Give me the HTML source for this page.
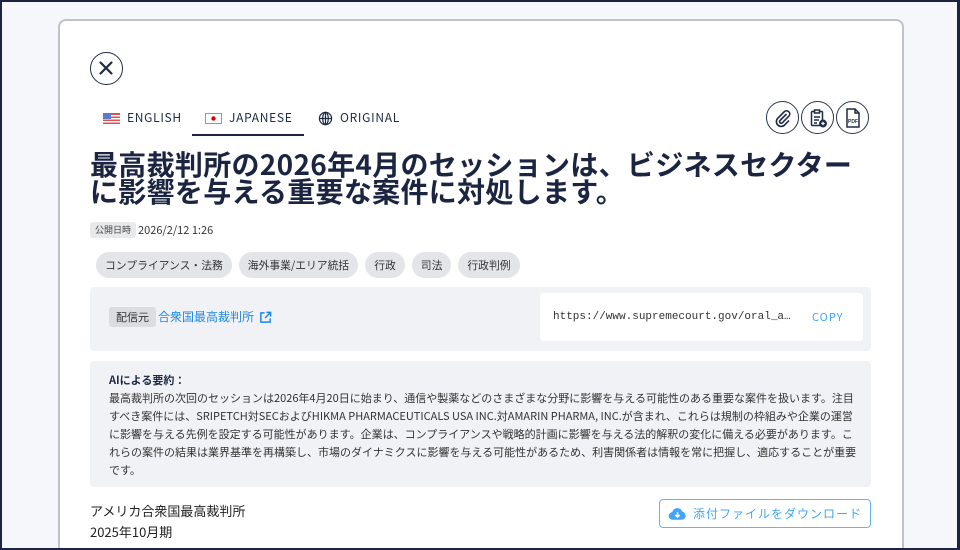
<!DOCTYPE html>
<html><head><meta charset="utf-8"><style>
*{margin:0;padding:0;box-sizing:border-box}
html,body{width:960px;height:550px;overflow:hidden}
body{background:#1b2440;font-family:"Noto Sans CJK JP","Liberation Sans",sans-serif;color:#1f2a44;position:relative}
.bg{position:absolute;left:2px;top:2px;width:955px;height:546px;background:#f5f7fb;overflow:hidden}
.card{position:absolute;left:56px;top:17px;width:846px;height:560px;background:#fff;border:2px solid #bfc3c9;border-radius:8px;overflow:hidden}
.abs{position:absolute}
.close{left:30px;top:31px;width:33px;height:33px;border:1.5px solid #1f2a44;border-radius:50%}
.tab{top:88px;font-size:12px;line-height:18px;letter-spacing:0.7px;color:#1f2a44;display:flex;align-items:center;gap:7px;white-space:nowrap}
.icb{top:80px;width:33px;height:33px;border:1.5px solid #2b3552;border-radius:50%;display:flex;align-items:center;justify-content:center}
h1{position:absolute;left:30px;top:130px;font-size:28px;line-height:27px;letter-spacing:0.3px;font-weight:bold;color:#1b2440;white-space:nowrap}
.tag{background:#e4e5e8;border-radius:13px;height:26px;line-height:26px;font-size:10.8px;padding:0 9px;color:#333;white-space:nowrap}
.src{left:30px;top:266px;width:781px;height:64px;background:#f1f2f5;border-radius:4px}
.sum{left:30px;top:340px;width:781px;height:126px;background:#f1f2f5;border-radius:4px;font-size:11px;line-height:18px;color:#333;padding:10px 0 0 19px;white-space:nowrap}
</style></head><body><div class="bg">
<div class="card">
 <div class="abs close"><svg width="30" height="30" viewBox="0 0 30 30"><path d="M9.5 9.5L20.5 20.5M20.5 9.5L9.5 20.5" stroke="#1f2a44" stroke-width="2.2" stroke-linecap="round"/></svg></div>
 <div class="abs tab" style="left:43px"><svg width="17" height="11"><rect width="17" height="11" fill="#e05050"/><rect y="2" width="17" height="1.5" fill="#fff"/><rect y="5" width="17" height="1.5" fill="#fff"/><rect y="8" width="17" height="1.5" fill="#fff"/><rect width="8" height="6" fill="#5a7bc8"/></svg>ENGLISH</div>
 <div class="abs tab" style="left:145px"><svg width="17" height="11"><rect x=".5" y=".5" width="16" height="10" fill="#fff" stroke="#999"/><circle cx="8.5" cy="5.5" r="2.2" fill="#d00"/></svg>JAPANESE</div>
 <div class="abs" style="left:132px;top:113px;width:112px;height:2px;background:#1b2440"></div>
 <div class="abs tab" style="left:258px"><svg width="15" height="15" viewBox="0 0 16 16" fill="none" stroke="#1f2a44" stroke-width="1.3"><circle cx="8" cy="8" r="6.5"/><ellipse cx="8" cy="8" rx="3" ry="6.5"/><path d="M1.5 8h13M8 1.5v13"/></svg>ORIGINAL</div>
 <div class="abs icb" style="left:706px"><svg width="20" height="20" viewBox="0 0 20 20" fill="none" stroke="#1f2a44" stroke-width="1.6"><path d="M13.5 6L7 12.5a1.6 1.6 0 0 0 2.3 2.3L16 8a3.2 3.2 0 0 0-4.5-4.5L4.8 10.2a4.8 4.8 0 0 0 6.8 6.8L16 12.5"/></svg></div>
 <div class="abs icb" style="left:741px"><svg width="20" height="20" viewBox="0 0 20 20" fill="none" stroke="#1f2a44" stroke-width="1.5"><rect x="3.5" y="3.5" width="11" height="14" rx="1"/><rect x="6.5" y="2" width="5" height="3" fill="#fff"/><path d="M6 9h6M6 12h5M6 15h3"/><circle cx="15" cy="15.5" r="3.2" fill="#1f2a44"/><path d="M15 13.8v3.4M13.3 15.5h3.4" stroke="#fff" stroke-width="1.2"/></svg></div>
 <div class="abs icb" style="left:776px"><svg width="20" height="22" viewBox="0 0 20 22" fill="none" stroke="#1f2a44" stroke-width="1.5"><path d="M4 2h8l4 4v14H4z"/><path d="M12 2v4h4"/><text x="10" y="16" font-size="5" font-family="Liberation Sans" font-weight="bold" fill="#1f2a44" stroke="none" text-anchor="middle">PDF</text></svg></div>
 <h1>最高裁判所の2026年4月のセッションは、ビジネスセクター<br>に影響を与える重要な案件に対処します。</h1>
 <div class="abs" style="left:30px;top:201px;background:#e8e9eb;border-radius:3px;font-size:9px;line-height:16px;padding:0 5px;color:#444">公開日時</div>
 <div class="abs" style="left:78px;top:201px;font-size:11px;line-height:16px;color:#333">2026/2/12 1:26</div>
 <div class="abs" style="left:36px;top:231px;display:flex;gap:7px">
  <div class="tag">コンプライアンス・法務</div><div class="tag">海外事業/エリア統括</div><div class="tag">行政</div><div class="tag">司法</div><div class="tag">行政判例</div>
 </div>
 <div class="abs src">
  <div class="abs" style="left:19px;top:20px;background:#dcdde0;border-radius:3px;font-size:11px;line-height:20px;padding:0 7px;color:#333">配信元</div>
  <div class="abs" style="left:68px;top:20px;font-size:12px;line-height:20px;color:#1e88e5;display:flex;align-items:center;gap:5px">合衆国最高裁判所<svg width="13" height="13" viewBox="0 0 14 14" fill="none" stroke="#1e88e5" stroke-width="1.6"><path d="M6 2H2v10h10V8M8 1.5h4.5V6M12.5 1.5L6.5 7.5"/></svg></div>
  <div class="abs" style="left:450px;top:6px;width:323px;height:48px;background:#fff;border-radius:4px">
   <div class="abs" style="left:13px;top:16px;font-family:'Liberation Mono',monospace;font-size:11px;line-height:16px;color:#333;white-space:nowrap">https://www.supremecourt.gov/oral_a…</div>
   <div class="abs" style="left:272px;top:16px;font-size:11px;line-height:16px;letter-spacing:1px;color:#42a5f5">COPY</div>
  </div>
 </div>
 <div class="abs sum"><b style="color:#1f2a44">AIによる要約：</b><br>最高裁判所の次回のセッションは2026年4月20日に始まり、通信や製薬などのさまざまな分野に影響を与える可能性のある重要な案件を扱います。注目<br>すべき案件には、SRIPETCH対SECおよびHIKMA PHARMACEUTICALS USA INC.対AMARIN PHARMA, INC.が含まれ、これらは規制の枠組みや企業の運営<br>に影響を与える先例を設定する可能性があります。企業は、コンプライアンスや戦略的計画に影響を与える法的解釈の変化に備える必要があります。こ<br>れらの案件の結果は業界基準を再構築し、市場のダイナミクスに影響を与える可能性があるため、利害関係者は情報を常に把握し、適応することが重要<br>です。</div>
 <div class="abs" style="left:30px;top:479px;font-size:13px;line-height:21px;color:#222;white-space:nowrap">アメリカ合衆国最高裁判所<br>2025年10月期</div>
 <div class="abs" style="left:599px;top:478px;width:212px;height:29px;border:1.5px solid #64b5f6;border-radius:4px;display:flex;align-items:center;justify-content:center;gap:6px;font-size:12px;letter-spacing:1px;color:#42a5f5;white-space:nowrap"><svg width="19" height="14" viewBox="0 0 20 14"><path d="M5 13a4 4 0 0 1-.5-8A5.5 5.5 0 0 1 15 4.5a4.3 4.3 0 0 1 0 8.5z" fill="#42a5f5"/><path d="M10 5v5M7.8 8l2.2 2.2L12.2 8" stroke="#fff" stroke-width="1.6" fill="none"/></svg>添付ファイルをダウンロード</div>
</div>
</div></body></html>
